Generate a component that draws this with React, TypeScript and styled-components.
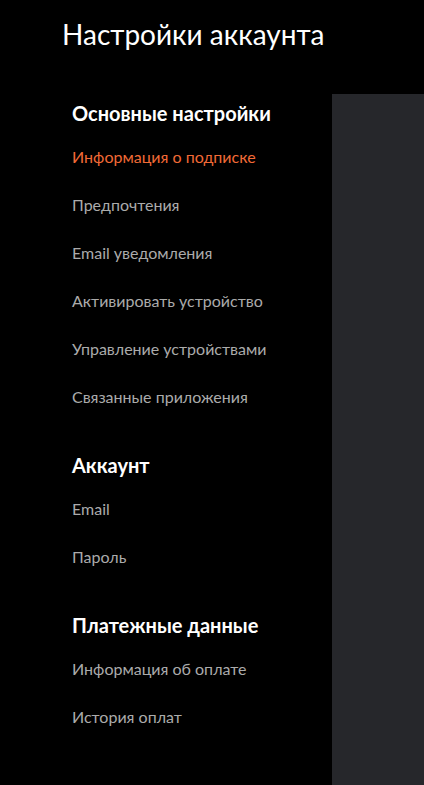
import styled, { createGlobalStyle } from 'styled-components';

const GlobalStyle = createGlobalStyle`
  html, body {
    margin: 0;
    padding: 0;
    background: #000;
  }

  body {
    font-family: Lato, 'Noto Sans', sans-serif;
    -webkit-font-smoothing: antialiased;
  }
`;

const Page = styled.div`
  min-height: 100vh;
  display: flex;
  flex-direction: column;
  background: #000;
`;

const Title = styled.h1`
  margin: 16px 0 0 62px;
  font-size: 28px;
  line-height: 36px;
  font-weight: 400;
  color: #fff;
`;

const Layout = styled.div`
  flex: 1;
  display: grid;
  grid-template-columns: 332px 1fr;
  margin-top: 42px;
`;

const Sidebar = styled.nav`
  padding: 7px 0 24px 72px;
`;

const Section = styled.section`
  & + & {
    margin-top: 32px;
  }
`;

const SectionTitle = styled.h2`
  margin: 0 0 8px;
  font-size: 20px;
  line-height: 24px;
  font-weight: 700;
  color: #fff;
`;

const MenuList = styled.ul`
  list-style: none;
  margin: 0;
  padding: 0;
`;

const MenuItem = styled.li<{ $active?: boolean }>`
  padding: 12px 0;
  font-size: 16px;
  line-height: 24px;
  color: ${({ $active }) => ($active ? '#f26a36' : '#ababab')};
  cursor: pointer;
`;

const Content = styled.main`
  background: #26272b;
`;

const sections = [
  {
    title: 'Основные настройки',
    items: [
      'Информация о подписке',
      'Предпочтения',
      'Email уведомления',
      'Активировать устройство',
      'Управление устройствами',
      'Связанные приложения',
    ],
  },
  {
    title: 'Аккаунт',
    items: ['Email', 'Пароль'],
  },
  {
    title: 'Платежные данные',
    items: ['Информация об оплате', 'История оплат'],
  },
];

export default function App() {
  const active = 'Информация о подписке';

  return (
    <>
      <GlobalStyle />
      <Page>
        <Title>Настройки аккаунта</Title>
        <Layout>
          <Sidebar>
            {sections.map((section) => (
              <Section key={section.title}>
                <SectionTitle>{section.title}</SectionTitle>
                <MenuList>
                  {section.items.map((item) => (
                    <MenuItem key={item} $active={item === active}>
                      {item}
                    </MenuItem>
                  ))}
                </MenuList>
              </Section>
            ))}
          </Sidebar>
          <Content />
        </Layout>
      </Page>
    </>
  );
}
